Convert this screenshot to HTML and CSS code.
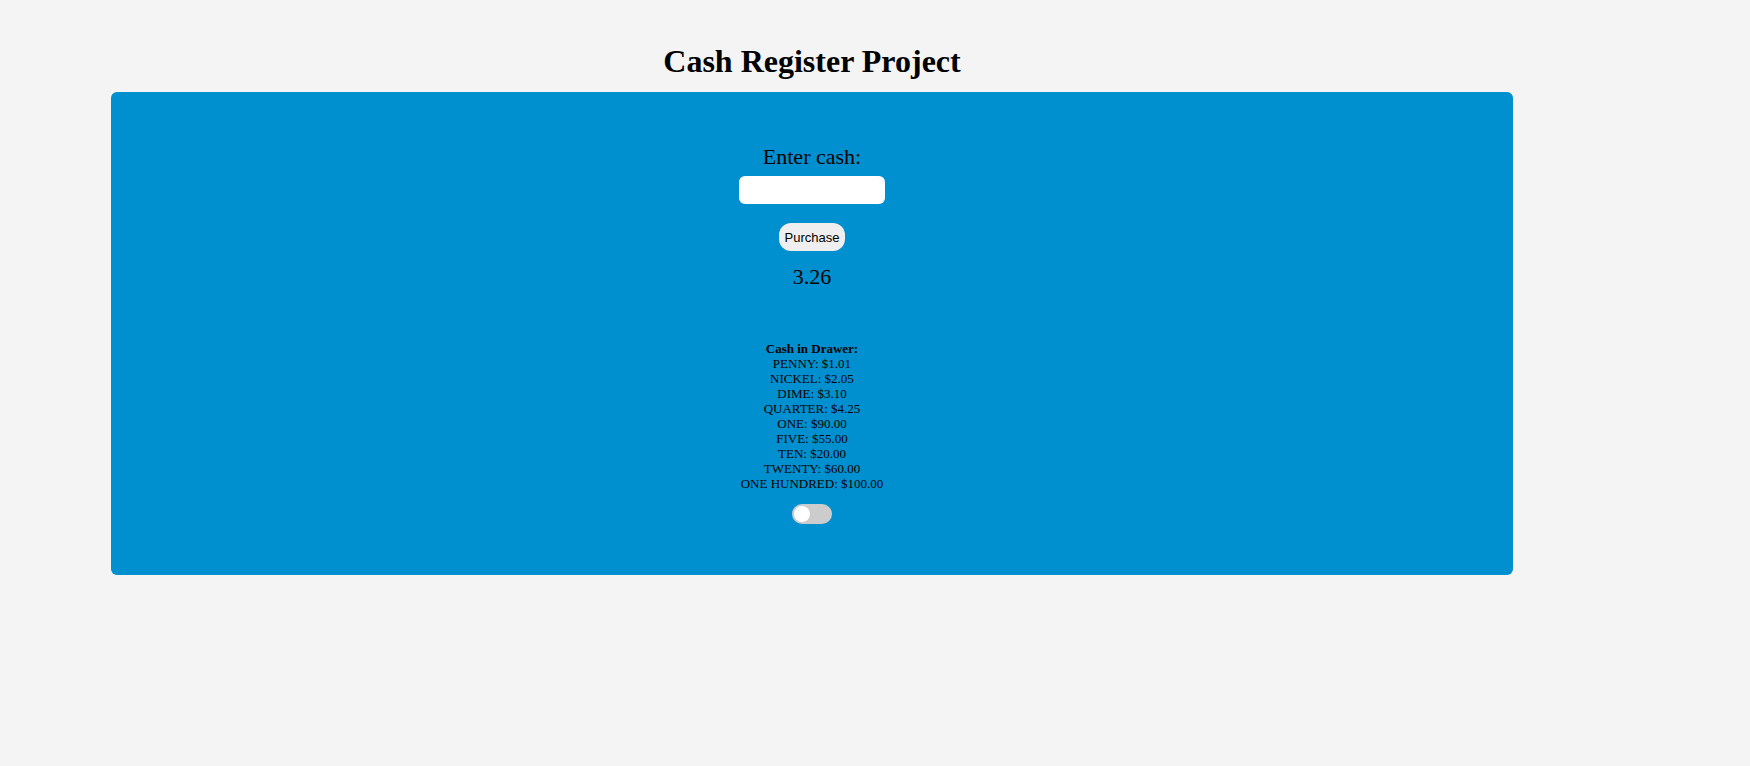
FILE: index.html
```html
<!DOCTYPE html>
<html lang="en">
<head>
  <meta charset="utf-8">
  <title>Cash Register Project</title>
  <link rel="stylesheet" href="styles.css">
</head>
<body>
  <main class="page">
    <h1 class="title">Cash Register Project</h1>
    <section class="register">
      <form class="payment">
        <label class="cash-label" for="cash">Enter cash:</label>
        <input class="cash-input" id="cash" type="number">
        <button class="purchase" type="button">Purchase</button>
      </form>
      <output class="price">3.26</output>
      <div class="drawer">
        <strong>Cash in Drawer:</strong>
        <ul class="drawer-list">
          <li>PENNY: $1.01</li>
          <li>NICKEL: $2.05</li>
          <li>DIME: $3.10</li>
          <li>QUARTER: $4.25</li>
          <li>ONE: $90.00</li>
          <li>FIVE: $55.00</li>
          <li>TEN: $20.00</li>
          <li>TWENTY: $60.00</li>
          <li>ONE HUNDRED: $100.00</li>
        </ul>
      </div>
      <input class="switch" type="checkbox" role="switch" aria-label="Dark mode">
    </section>
  </main>
</body>
</html>
```
FILE: styles.css
```css
* {
  box-sizing: border-box;
}

body {
  margin: 0;
  background: #f4f4f4;
  color: #000;
  font-family: "Liberation Serif", "Times New Roman", serif;
}

.page {
  padding: 42px 237px 40px 111px;
}

.title {
  margin: 0 0 12px;
  font-size: 32px;
  line-height: 38px;
  text-align: center;
}

.register,
.payment {
  display: flex;
  flex-direction: column;
  align-items: center;
}

.register {
  padding: 52px 16px 51px;
  border-radius: 6px;
  background: #008fcf;
}

.cash-label,
.price {
  font-size: 22px;
  line-height: 26px;
}

.cash-input {
  width: 146px;
  height: 28px;
  margin: 6px 0 19px;
  padding: 0 8px;
  border: 0;
  border-radius: 6px;
  background: #fff;
  font-size: 13px;
}

.purchase {
  height: 28px;
  padding: 0 6px;
  border: 0;
  border-radius: 12px;
  background: #efefef;
  color: #000;
  font-family: "Liberation Sans", Arial, sans-serif;
  font-size: 13px;
}

.price {
  margin: 13px 0 51px;
}

.drawer {
  font-size: 13px;
  line-height: 15px;
  text-align: center;
}

.drawer-list {
  margin: 0;
  padding: 0;
  list-style: none;
}

.switch {
  display: flex;
  align-items: center;
  width: 40px;
  height: 20px;
  margin: 13px 0 0;
  padding: 2px;
  border-radius: 10px;
  background: #ccc;
  appearance: none;
  cursor: pointer;
}

.switch::before {
  width: 16px;
  height: 16px;
  border-radius: 50%;
  background: #fff;
  content: "";
}

.switch:checked {
  justify-content: flex-end;
}
```
